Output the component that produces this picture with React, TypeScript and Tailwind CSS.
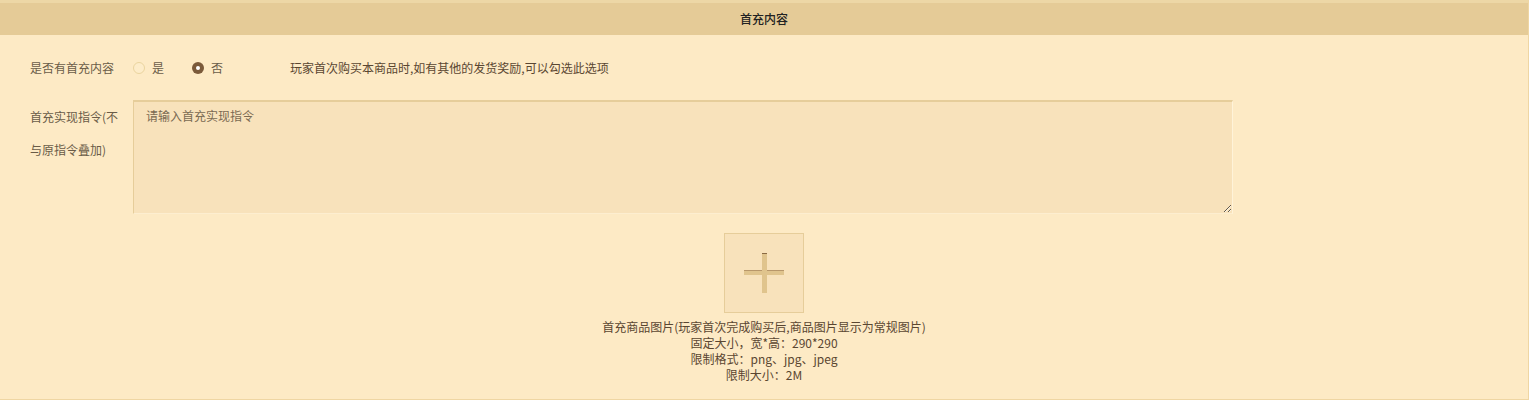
export default function App() {
  const font = { fontFamily: "'Microsoft YaHei', 'Noto Sans CJK SC', 'Liberation Sans', sans-serif" };
  return (
    <div className="w-[1529px] h-[400px] bg-[#fdeac5] border-r border-b border-[#efd6a3] text-[12px]" style={font}>
      {/* header */}
      <div className="h-[3px] bg-[#edd7a6]" />
      <div className="h-[32px] bg-[#e5cb97] flex items-center justify-center text-[#222] font-medium">
        首充内容
      </div>

      {/* first recharge toggle */}
      <div className="flex items-center h-[33px] mt-[16px] pl-[30px] text-[#6a5c48]">
        <div className="w-[103px]">是否有首充内容</div>
        <label className="flex items-center gap-[7px] w-[59px]">
          <span className="w-[12px] h-[12px] rounded-full border border-[#ead49f] bg-[#fdecc9]" />
          <span>是</span>
        </label>
        <label className="flex items-center gap-[7px] w-[98px]">
          <span className="w-[12px] h-[12px] rounded-full bg-[#7b5a3a] flex items-center justify-center">
            <span className="w-[4px] h-[4px] rounded-full bg-white" />
          </span>
          <span>否</span>
        </label>
        <div className="text-[#5a4631]">玩家首次购买本商品时,如有其他的发货奖励,可以勾选此选项</div>
      </div>

      {/* command */}
      <div className="flex pl-[30px] mt-[16px] text-[#6a5c48]">
        <div className="w-[103px] leading-[33px]">
          <div>首充实现指令(不</div>
          <div>与原指令叠加)</div>
        </div>
        <textarea
          placeholder="请输入首充实现指令"
          className="w-[1100px] h-[114px] bg-[#f8e2bb] border-t-2 border-l border-[#e6cd9a] border-r border-r-[#fff3d9] border-b border-b-[#fdeed0] px-[12px] pt-[5px] text-[12px] placeholder-[#7a6a52] outline-none"
          style={font}
        />
      </div>

      {/* image upload */}
      <div className="flex flex-col items-center mt-[19px]">
        <div className="w-[80px] h-[80px] bg-[#f8e2bb] border border-[#e6cd9a] flex items-center justify-center relative">
          <div className="absolute left-[19px] top-[36px] w-[40px] h-[5px] bg-[#e0c48d] border-t border-[#b8976a]" />
          <div className="absolute left-[37px] top-[19px] w-[5px] h-[40px] bg-[#e0c48d] border-t border-[#8a6a44]" />
        </div>
        <div className="mt-[6px] text-center leading-[16px] text-[#5a4631]">
          <div>首充商品图片(玩家首次完成购买后,商品图片显示为常规图片)</div>
          <div>固定大小，宽*高：290*290</div>
          <div>限制格式：png、jpg、jpeg</div>
          <div>限制大小：2M</div>
        </div>
      </div>
    </div>
  );
}
